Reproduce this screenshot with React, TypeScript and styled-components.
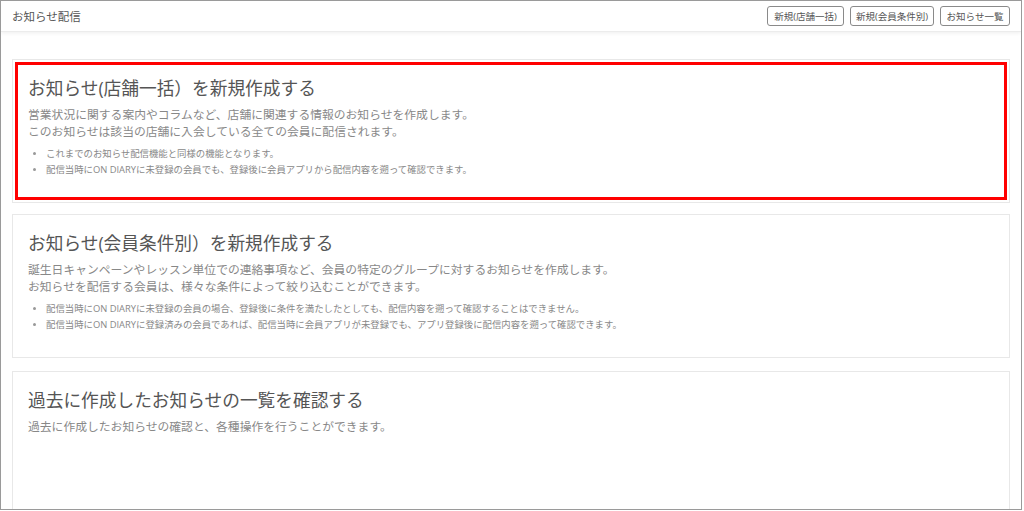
import React from "react";
import styled, { createGlobalStyle } from "styled-components";

const GlobalStyle = createGlobalStyle`
  html, body { margin: 0; padding: 0; background: #ffffff; overflow: hidden; }
  body { font-family: "Open Sans", "Noto Sans CJK JP", sans-serif; }
`;

const Frame = styled.div`
  box-sizing: border-box;
  width: 1022px;
  height: 510px;
  border: 1px solid #9a9a9a;
  background: #ffffff;
  overflow: hidden;
  display: flex;
  flex-direction: column;
`;

const Header = styled.header`
  box-sizing: border-box;
  height: 31px;
  flex: none;
  display: flex;
  align-items: center;
  justify-content: space-between;
  padding: 0 11px 0 11px;
  border-bottom: 1px solid #ececec;
  box-shadow: 0 1px 4px rgba(0, 0, 0, 0.07);
  position: relative;
  z-index: 1;
`;

const PageTitle = styled.h1`
  margin: 0;
  font-size: 11.5px;
  font-weight: 400;
  color: #555;
`;

const ButtonGroup = styled.div`
  display: flex;
  gap: 6px;
`;

const HeaderButton = styled.button<{ $w: number }>`
  box-sizing: border-box;
  width: ${(p) => p.$w}px;
  height: 20px;
  padding: 0;
  border: 1px solid #8a8a8a;
  border-radius: 3px;
  background: #fff;
  color: #555;
  font-family: "Open Sans", "Noto Sans CJK JP", sans-serif;
  font-size: 9.5px;
  cursor: pointer;
`;

const Main = styled.main`
  flex: 1;
  padding: 27px 11px 0 11px;
  display: flex;
  flex-direction: column;
  gap: 11px;
`;

const Card = styled.section<{ $highlight?: boolean; $minHeight?: number; $extraTop?: number }>`
  box-sizing: border-box;
  border: 1px solid #e8e8e8;
  background: #fff;
  padding: 16px 15px 24px 15px;
  margin-top: ${(p) => p.$extraTop ?? 0}px;
  min-height: ${(p) => (p.$minHeight ? `${p.$minHeight}px` : "auto")};
  outline: ${(p) => (p.$highlight ? "3px solid #ff0000" : "none")};
  outline-offset: -6px;
  flex: none;
`;

const CardTitle = styled.h2`
  margin: 0;
  font-size: 17.7px;
  line-height: 24px;
  font-weight: 400;
  color: #555;
`;

const Desc = styled.p`
  margin: 6px 0 0 0;
  font-size: 11.8px;
  line-height: 17px;
  color: #888;
`;

const Notes = styled.ul`
  margin: 6px 0 0 0;
  padding-left: 18px;
  list-style: disc;
`;

const Note = styled.li`
  font-size: 9.4px;
  line-height: 16px;
  color: #888;
  &::marker { color: #999; font-size: 8px; }
`;

export default function App() {
  return (
    <>
      <GlobalStyle />
      <Frame>
        <Header>
          <PageTitle>お知らせ配信</PageTitle>
          <ButtonGroup>
            <HeaderButton $w={77}>新規(店舗一括)</HeaderButton>
            <HeaderButton $w={84}>新規(会員条件別)</HeaderButton>
            <HeaderButton $w={70}>お知らせ一覧</HeaderButton>
          </ButtonGroup>
        </Header>
        <Main>
          <Card $highlight>
            <CardTitle>お知らせ(店舗一括）を新規作成する</CardTitle>
            <Desc>
              営業状況に関する案内やコラムなど、店舗に関連する情報のお知らせを作成します。
              <br />
              このお知らせは該当の店舗に入会している全ての会員に配信されます。
            </Desc>
            <Notes>
              <Note>これまでのお知らせ配信機能と同様の機能となります。</Note>
              <Note>配信当時にON DIARYに未登録の会員でも、登録後に会員アプリから配信内容を遡って確認できます。</Note>
            </Notes>
          </Card>
          <Card>
            <CardTitle>お知らせ(会員条件別）を新規作成する</CardTitle>
            <Desc>
              誕生日キャンペーンやレッスン単位での連絡事項など、会員の特定のグループに対するお知らせを作成します。
              <br />
              お知らせを配信する会員は、様々な条件によって絞り込むことができます。
            </Desc>
            <Notes>
              <Note>配信当時にON DIARYに未登録の会員の場合、登録後に条件を満たしたとしても、配信内容を遡って確認することはできません。</Note>
              <Note>配信当時にON DIARYに登録済みの会員であれば、配信当時に会員アプリが未登録でも、アプリ登録後に配信内容を遡って確認できます。</Note>
            </Notes>
          </Card>
          <Card $minHeight={160} $extraTop={2}>
            <CardTitle>過去に作成したお知らせの一覧を確認する</CardTitle>
            <Desc>過去に作成したお知らせの確認と、各種操作を行うことができます。</Desc>
          </Card>
        </Main>
      </Frame>
    </>
  );
}
